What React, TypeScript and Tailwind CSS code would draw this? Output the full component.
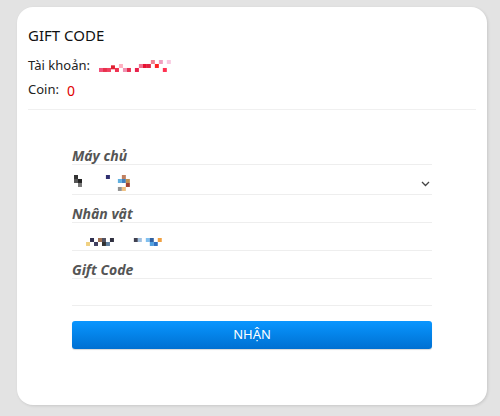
import React from "react";

type Px = [number, number, string];

// censored (pixelated) text, drawn as tiny blocks on a 3px grid
const ACCOUNT: Px[] = [
  [0, 6, "#f0507a"], [3, 6, "#e8304a"], [6, 6, "#f04060"], [9, 4, "#e02030"], [12, 6, "#f03050"],
  [15, 3, "#ffb0c0"], [18, 6, "#f090b0"], [21, 6, "#e83050"], [27, 6, "#e8204a"],
  [30, 3, "#f07090"], [33, 3, "#e81030"], [36, 3, "#e02040"], [39, 0, "#f08090"],
  [42, 3, "#ff2020"], [45, 0, "#f0a0c0"], [48, 6, "#ff3050"], [51, 0, "#f8c8e0"],
];
const SERVER: Px[] = [
  [0, 0, "#333333"], [0, 3, "#555555"], [3, 3, "#222222"], [3, 6, "#777777"],
  [24, 0, "#303070"], [36, 0, "#c08060"], [33, 3, "#60b0e0"], [36, 3, "#4080c0"],
  [39, 3, "#c09050"], [39, 6, "#a04030"], [33, 9, "#909090"], [36, 9, "#f0c080"],
];
const CHAR: Px[] = [
  [0, 3, "#f0d080"], [3, 0, "#303050"], [6, 3, "#404060"], [9, 0, "#a07050"], [12, 0, "#505060"],
  [12, 3, "#303030"], [15, 3, "#6080a0"], [18, 0, "#303040"], [36, 0, "#404050"], [39, 0, "#a0c0e0"],
  [45, 0, "#80c0f0"], [48, 0, "#3060a0"], [48, 3, "#50a0e0"], [51, 3, "#3070c0"], [54, 0, "#f0a040"],
];

function Pixels({ data, w, h, scale = 1.33 }: { data: Px[]; w: number; h: number; scale?: number }) {
  return (
    <svg width={w * scale} height={h * scale} viewBox={`0 0 ${w} ${h}`} className="block">
      {data.map(([x, y, c], i) => (
        <rect key={i} x={x} y={y} width={3} height={3} fill={c} />
      ))}
    </svg>
  );
}

function Label({ children }: { children: React.ReactNode }) {
  return (
    <div className="h-[28px] border-b border-[#eeeeee] pt-[10px] text-[14px] leading-[17px] font-bold italic text-[#555555]">
      {children}
    </div>
  );
}

export default function App() {
  return (
    <div
      className="min-h-[416px] w-[500px] bg-[#e3e3e3] pt-[7px] pl-[17px]"
      style={{ fontFamily: '"Noto Sans", "Open Sans", sans-serif' }}
    >
      <div className="h-[398px] w-[470px] rounded-2xl bg-white px-[11px] pt-[18px] shadow-[1px_1px_3px_rgba(0,0,0,0.12)]">
        <h1 className="text-[15px] leading-[20px] font-normal text-[#111111]">GIFT CODE</h1>

        <div className="mt-[12px] flex h-[18px] items-center text-[13px] text-[#222222]">
          <span>Tài khoản:</span>
          <span className="ml-[9px]">
            <Pixels data={ACCOUNT} w={54} h={9} />
          </span>
        </div>
        <div className="mt-[6px] flex h-[18px] items-center text-[13px] text-[#222222]">
          <span>Coin:</span>
          <span className="ml-[8px] text-[14px] text-[#e00000]">0</span>
        </div>

        <div className="mt-[10px] border-t border-[#f0f0f0]" />

        <div className="mx-[44px] mt-[27px] w-[360px]">
          <Label>Máy chủ</Label>
          <div className="flex h-[30px] items-end justify-between border-b border-[#eeeeee] pb-[3px]">
            <span className="ml-[2px]">
              <Pixels data={SERVER} w={42} h={12} />
            </span>
            <svg width="9" height="6" viewBox="0 0 9 6" className="mr-[2px] mb-[4px]">
              <path d="M1 1l3.5 3.5L8 1" fill="none" stroke="#444" strokeWidth="1.3" />
            </svg>
          </div>

          <Label>Nhân vật</Label>
          <div className="flex h-[28px] items-end border-b border-[#eeeeee] pb-[4px] pl-[14px]">
            <Pixels data={CHAR} w={57} h={6} />
          </div>

          <Label>Gift Code</Label>
          <div className="h-[27px] border-b border-[#eeeeee]" />

          <button className="mt-[15px] flex h-[28px] w-full items-center justify-center rounded-[3px] bg-gradient-to-b from-[#0a96ff] to-[#0070d2] text-[13px] text-white shadow-[0_1px_1px_rgba(0,0,0,0.15)]">
            NHẬN
          </button>
        </div>
      </div>
    </div>
  );
}
